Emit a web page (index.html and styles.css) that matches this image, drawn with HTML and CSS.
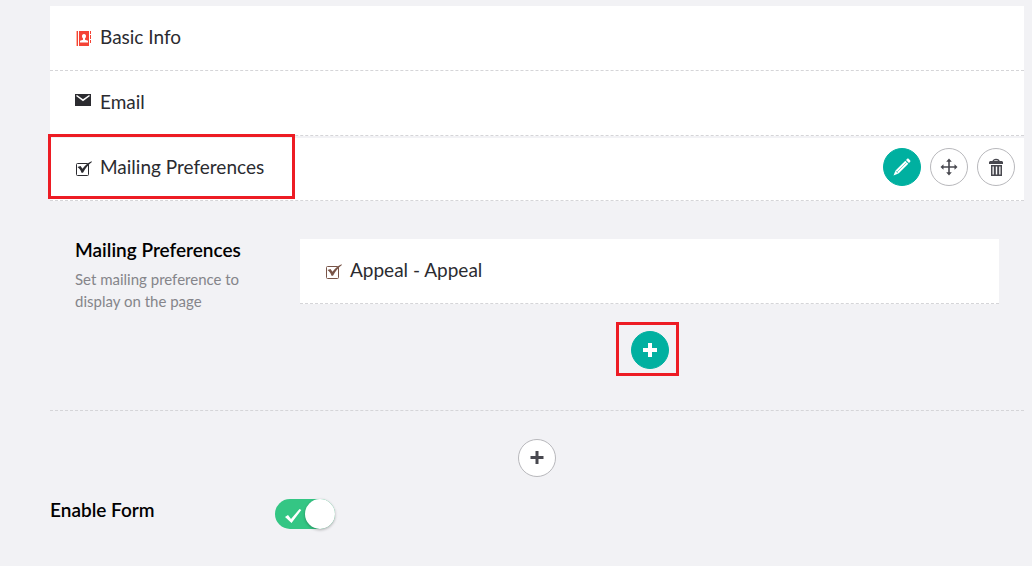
FILE: index.html
```
<!DOCTYPE html>
<html lang="en">
<head>
<meta charset="UTF-8" />
<meta name="viewport" content="width=device-width, initial-scale=1" />
<title>Form Settings</title>
<link rel="stylesheet" href="styles.css">
</head>
<body>

<main class="form-builder">
  <div class="block">
    <svg class="icon" viewBox="0 0 18 18">
      <path fill="#f44336" d="M3 3h1v15H3zM5 3h10v15H5zM16 3h1v3h-1zM16 7h1v4h-1zM16 12h1v3h-1z"/>
      <path fill="#ffb3a0" d="M2 3h1v15H2z"/>
      <path fill="#fff" d="M10 6c1.500 0 2 1 2 2.200 0 1-.4 1.800-1 2.300v1.200l3 1V14.500H6v-1.800l3-1V10.500c-.6-.5-1-1.300-1-2.300C8 7 8.500 6 10 6z"/>
    </svg>
    <span>Basic Info</span>
  </div>

  <div class="block">
    <svg class="icon" viewBox="0 0 18 18">
      <path fill="#2b2b30" d="M1 1h16v12H1z"/>
      <path fill="none" stroke="#fff" stroke-width="1.500" d="M2.500 2.500L9 7.200l6.500-4.700"/>
    </svg>
    <span>Email</span>
  </div>

  <div class="block active">
    <svg class="icon" viewBox="0 0 18 18">
      <rect x="2.500" y="5.500" width="12" height="12" rx="1" fill="none" stroke="#2b2b30"/>
      <path fill="#2b2b30" d="M3.500 9l3-1 2 2.700C11 7.500 13.500 5.200 17.500 3.200l.4.700C14 7 11.500 10 9 14.700H7.500C6.800 12.500 5.500 10.500 3.500 9z"/>
    </svg>
    <span>Mailing Preferences</span>
    <div class="actions">
      <button class="round primary" type="button" aria-label="Edit">
        <svg viewBox="0 0 20 20">
          <path fill="#fff" d="M1.500 18.500l2-5L13.300 3.700l3 3L6.500 16.500zM14 3l1-1c.6-.6 1.200-.6 1.800 0l1.200 1.200c.6.600.6 1.200 0 1.800l-1 1z"/>
          <path fill="none" stroke="#00b0a0" stroke-width="0.500" d="M5 15L14.500 5.500M3.500 13.700l2.800 2.800"/>
        </svg>
      </button>
      <button class="round" type="button" aria-label="Move">
        <svg viewBox="0 0 20 20">
          <path fill="#48484f" d="M10 1.500l2.800 3.300h-2v4.400h4.700v-2l3 2.800-3 2.800v-2h-4.700v4.400h2L10 18.500l-2.800-3.300h2v-4.400H4.500v2l-3-2.800 3-2.800v2h4.700V4.800h-2z"/>
        </svg>
      </button>
      <button class="round" type="button" aria-label="Delete">
        <svg viewBox="0 0 20 20">
          <path fill="none" stroke="#48484f" stroke-width="1.300" d="M7 4.500C7 1.800 13 1.800 13 4.500"/>
          <path fill="#48484f" d="M4 4h12l1 1v2H3V5z"/>
          <path fill="#48484f" fill-rule="evenodd" d="M5 8h11v11H5zM6.500 9.500v8h1.300v-8zM9.800 9.500v8h1.400v-8zM13.200 9.500v8h1.300v-8z"/>
        </svg>
      </button>
    </div>
  </div>

  <section class="details">
    <div class="intro">
      <h2>Mailing Preferences</h2>
      <p>Set mailing preference to display on the page</p>
    </div>
    <div class="choices">
      <div class="block">
        <svg class="icon" viewBox="0 0 18 18">
          <rect x="2.500" y="5.500" width="12" height="12" rx="1" fill="none" stroke="#795548"/>
          <path fill="#795548" d="M3.500 9l3-1 2 2.700C11 7.500 13.500 5.200 17.500 3.200l.4.700C14 7 11.500 10 9 14.700H7.500C6.800 12.500 5.500 10.500 3.500 9z"/>
        </svg>
        <span>Appeal - Appeal</span>
      </div>
      <div class="add marked">
        <button class="round primary" type="button" aria-label="Add preference">
          <svg viewBox="0 0 20 20"><path fill="#fff" d="M8 3h4v5h5v4h-5v5H8v-5H3V8h5z"/></svg>
        </button>
      </div>
    </div>
  </section>

  <div class="add">
    <button class="round" type="button" aria-label="Add block">
      <svg viewBox="0 0 20 20"><path fill="#48484f" d="M8.500 3h3v5h5v3h-5v5h-3v-5h-5V8h5z"/></svg>
    </button>
  </div>

  <div class="enable">
    <label for="enableForm">Enable Form</label>
    <span class="switch">
      <input type="checkbox" id="enableForm" checked>
      <svg class="tick" viewBox="0 0 18 18"><path fill="#fff" d="M1 10l3-2 3 4L15.500 2l1.800 1L7.500 16z"/></svg>
    </span>
  </div>
</main>

</body>
</html>
```
FILE: styles.css
```
*,
*::before {
  box-sizing: border-box;
}
body {
  margin: 0;
  background: #f2f2f5;
  color: #2b2b30;
  font-family: Lato, sans-serif;
  font-size: 19px;
  line-height: 24px;
}
.form-builder {
  padding: 6px 8px 32px 50px;
}
.block {
  display: flex;
  align-items: center;
  gap: 8px;
  height: 65px;
  padding: 0 9px 2px 24px;
  background: #fff;
  border-bottom: 1px dashed #d5d5d8;
}
.icon {
  flex: none;
  width: 18px;
  height: 18px;
}
.block.active {
  position: relative;
  border-top: 2px solid #f2f2f5;
  padding-bottom: 4px;
}
/* red outlines that point out the row and its add button */
.block.active::before,
.marked::before {
  content: "";
  position: absolute;
  border: 3px solid #ed1c24;
  pointer-events: none;
}
.block.active::before {
  top: -4px;
  left: -2px;
  width: 247px;
  height: 65px;
}
.actions {
  display: flex;
  gap: 9px;
  margin-left: auto;
}
.round {
  display: flex;
  align-items: center;
  justify-content: center;
  width: 38px;
  height: 38px;
  padding: 0;
  background: #fff;
  border: 1px solid #b8b8bc;
  border-radius: 50%;
  cursor: pointer;
}
.round.primary {
  background: #00b0a0;
  border-color: #00b0a0;
}
.round svg {
  width: 20px;
  height: 20px;
}
.details {
  display: flex;
  padding: 38px 25px 41px;
  border-bottom: 1px dashed #d5d5d8;
}
.intro {
  flex: none;
  width: 225px;
  padding-right: 50px;
}
h2,
.enable label {
  margin: 0;
  color: #000;
  font-size: 19px;
  font-weight: 600;
  line-height: 22px;
}
.intro p {
  margin: 7px 0 0;
  color: #85858a;
  font-size: 15px;
  line-height: 22px;
}
.choices {
  flex: 1;
}
.add {
  display: flex;
  justify-content: center;
  padding-top: 28px;
}
.choices .add {
  padding-top: 27px;
}
.marked {
  position: relative;
}
.marked::before {
  top: 18px;
  left: calc(50% - 34px);
  width: 63px;
  height: 54px;
}
.enable {
  display: flex;
  align-items: center;
  margin-top: 22px;
}
.enable label {
  width: 225px;
  padding-bottom: 8px;
}
.switch {
  position: relative;
  width: 60px;
  height: 30px;
}
.switch input {
  display: block;
  appearance: none;
  width: 60px;
  height: 30px;
  margin: 0;
  background: #34c684;
  border-radius: 15px;
  cursor: pointer;
}
.switch input::after {
  content: "";
  display: block;
  width: 30px;
  height: 30px;
  margin-left: 30px;
  background: #fff;
  border-radius: 50%;
  box-shadow: 0 1px 3px rgba(0,0,0,0.3);
}
.tick {
  position: absolute;
  top: 8px;
  left: 9px;
  width: 18px;
  height: 18px;
  pointer-events: none;
}
```
